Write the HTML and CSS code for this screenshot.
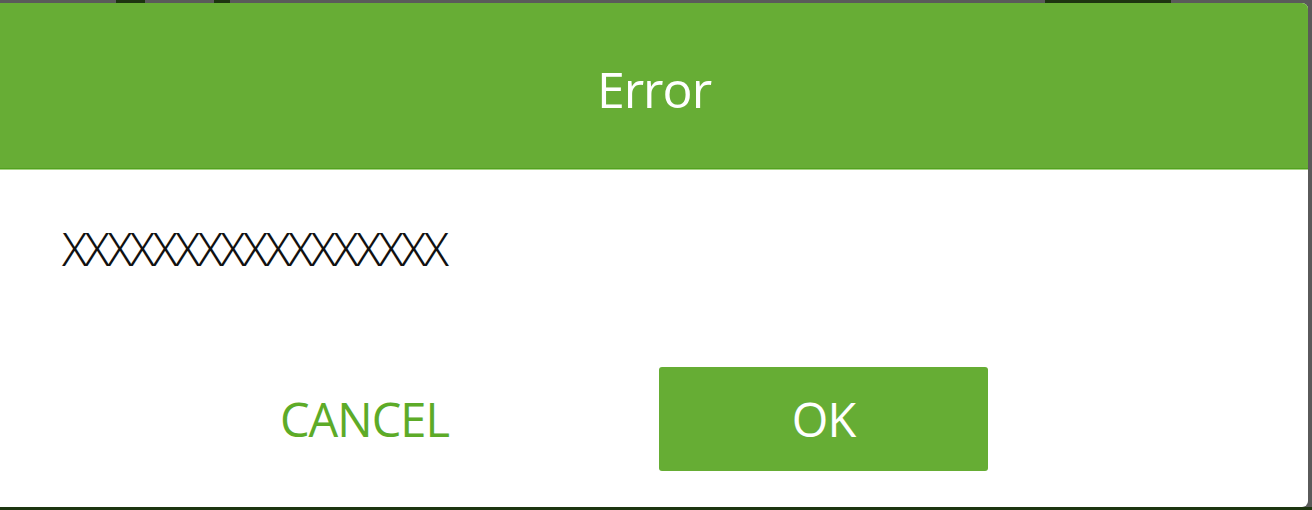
FILE: index.html
```html
<!DOCTYPE html>
<html lang="en">
<head>
<meta charset="UTF-8" />
<meta name="viewport" content="width=device-width, initial-scale=1.0">
<title>Error</title>
<link rel="stylesheet" href="styles.css">
</head>
<body>

  <!-- error dialog -->
  <main class="dialog">
    <header class="dialog-title">Error</header>

    <section class="dialog-body">
      <p class="message">XXXXXXXXXXXXXXXXX</p>
    </section>

    <!-- dialog buttons -->
    <footer class="dialog-buttons">
      <button class="btn btn-cancel">CANCEL</button>
      <button class="btn btn-ok">OK</button>
    </footer>
  </main>

</body>
</html>
```

FILE: styles.css
```css
/* page behind the dialog */
body
{
  margin: 0;
  height: 510px;
  overflow: hidden;
  background:
    linear-gradient(#1d3510, #1d3510) 116px 0 / 29px 3px no-repeat,
    linear-gradient(#1d3510, #1d3510) 214px 0 / 16px 3px no-repeat,
    linear-gradient(#1d3510, #1d3510) 1045px 0 / 126px 3px no-repeat,
    linear-gradient(#5a5a5a 507px, #1d3510 507px);
  font-family: "Open Sans", "Noto Sans", sans-serif;
}
/* dialog box */
.dialog
{
  display: flex;
  flex-direction: column;
  width: 1308px;
  height: 504px;
  margin-top: 3px;
  background: #ffffff;
  border-radius: 0 6px 6px 0;
  overflow: hidden;
}
/* green title bar */
.dialog-title
{
  height: 166px;
  box-sizing: border-box;
  padding-top: 61px;
  background: #67ad35;
  border-bottom: 1px solid #52a21f;
  box-shadow: 0 1px 0 #a8d486;
  color: #ffffff;
  font-size: 50px;
  line-height: 50px;
  letter-spacing: -1px;
  text-align: center;
}
/* message area */
.dialog-body
{
  padding: 54px 0 0 62px;
}
.message
{
  margin: 0;
  height: 50px;
  color: #111111;
  font-family: "Noto Sans", "Open Sans", sans-serif;
  font-size: 46px;
  font-stretch: 87.5%;
  font-weight: 350;
  line-height: 50px;
  letter-spacing: -2.6px;
}
/* buttons row */
.dialog-buttons
{
  display: flex;
  gap: 130px;
  padding: 94px 0 0 200px;
}
.btn
{
  width: 329px;
  height: 104px;
  border: 0;
  border-radius: 3px;
  padding: 0;
  font-family: "Open Sans", "Noto Sans", sans-serif;
  font-size: 47px;
  letter-spacing: -1px;
  cursor: pointer;
}
.btn-cancel
{
  background: transparent;
  color: #5dab28;
}
.btn-ok
{
  background: #66ad34;
  color: #ffffff;
}
```
